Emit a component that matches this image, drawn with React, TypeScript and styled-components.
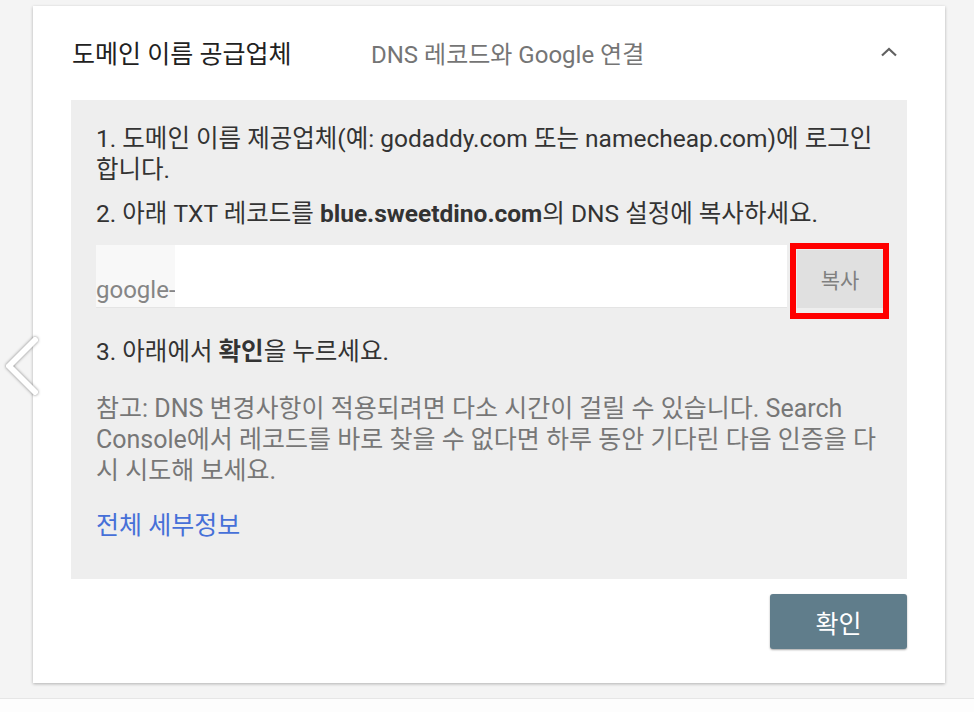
import React from 'react';
import styled, { createGlobalStyle } from 'styled-components';

const GlobalStyle = createGlobalStyle`
  html, body {
    margin: 0;
    padding: 0;
    background: #f4f4f4;
    font-family: Roboto, "Noto Sans CJK KR", sans-serif;
  }
`;

const Page = styled.div`
  position: relative;
  width: 974px;
  height: 712px;
  overflow: hidden;
  background: #f4f4f4;
  padding-top: 6px;
  box-sizing: border-box;
`;

const Card = styled.div`
  margin-left: 33px;
  width: 912px;
  height: 677px;
  background: #fff;
  box-shadow: 0 1px 3px rgba(0, 0, 0, 0.28);
  padding: 0 38px;
  box-sizing: border-box;
  display: flex;
  flex-direction: column;
`;

const Header = styled.div`
  height: 94px;
  display: flex;
  align-items: center;
  padding-left: 1px;
  padding-bottom: 2px;
  box-sizing: border-box;
`;

const Title = styled.div`
  width: 299px;
  font-size: 25px;
  color: #212121;
`;

const Subtitle = styled.div`
  flex: 1;
  font-size: 24px;
  color: #757575;
`;

const Toggle = styled.div`
  width: 20px;
  margin-right: 8px;
  display: flex;
  justify-content: center;
`;

const Panel = styled.div`
  background: #eeeeee;
  padding: 23px 25px 38px 25px;
  display: flex;
  flex-direction: column;
`;

const Step = styled.p<{ $gap?: number }>`
  margin: 0 0 ${p => p.$gap ?? 13}px 0;
  font-size: 24.5px;
  line-height: 31px;
  color: #333;
`;

const FieldRow = styled.div`
  display: flex;
  align-items: flex-start;
  margin: 16px -7px 17px 0;
`;

const Field = styled.div`
  flex: 1;
  height: 63px;
  display: flex;
  border-bottom: 1px solid #e4e4e4;
  box-sizing: border-box;
`;

const FieldPrefix = styled.span`
  width: 79px;
  background: #f8f8f8;
  display: flex;
  align-items: flex-end;
  font-size: 24px;
  color: #858585;
  line-height: 1;
  padding-bottom: 5px;
  box-sizing: border-box;
  overflow: hidden;
  white-space: nowrap;
`;

const FieldMask = styled.span`
  flex: 1;
  background: #fff;
`;

const Highlight = styled.div`
  flex-shrink: 0;
  margin-left: 3px;
  margin-top: -2px;
  border: 6px solid #ff0000;
  padding: 1px 0 5px 1px;
`;

const CopyButton = styled.button`
  width: 86px;
  height: 58px;
  border: none;
  background: #e0e0e0;
  color: #808080;
  font-family: inherit;
  font-size: 21px;
  padding: 0;
  display: flex;
  align-items: center;
  justify-content: center;
`;

const Note = styled.p`
  margin: 26px 0 24px 0;
  font-size: 25px;
  line-height: 31px;
  color: #777;
`;

const Link = styled.a`
  font-size: 25px;
  line-height: 31px;
  color: #4670d8;
  text-decoration: none;
`;

const Footer = styled.div`
  display: flex;
  justify-content: flex-end;
  padding-top: 15px;
`;

const ConfirmButton = styled.button`
  width: 137px;
  height: 55px;
  border: none;
  border-radius: 3px;
  background: #607d8b;
  color: #fff;
  font-family: inherit;
  font-size: 25px;
  padding: 0;
  box-shadow: 0 1px 2px rgba(0, 0, 0, 0.35);
`;

const BottomCard = styled.div`
  position: absolute;
  left: 0;
  right: 0;
  top: 698px;
  height: 20px;
  background: #fdfdfd;
  border-top: 1px solid #e6e6e6;
`;

const PrevArrow = styled.div`
  position: absolute;
  left: 2px;
  top: 334px;
  width: 40px;
  height: 64px;
  filter: drop-shadow(0 0 1.5px rgba(0, 0, 0, 0.5));
`;

const App: React.FC = () => {
  return (
    <Page>
      <GlobalStyle />
      <Card>
        <Header>
          <Title>도메인 이름 공급업체</Title>
          <Subtitle>DNS 레코드와 Google 연결</Subtitle>
          <Toggle>
            <svg width="18" height="12" viewBox="0 0 18 12">
              <polyline points="2,9.5 9,3 16,9.5" fill="none" stroke="#616161" strokeWidth="2.2" />
            </svg>
          </Toggle>
        </Header>

        <Panel>
          <Step>1. 도메인 이름 제공업체(예: godaddy.com 또는 namecheap.com)에 로그인 합니다.</Step>
          <Step $gap={0}>
            2. 아래 TXT 레코드를 <strong>blue.sweetdino.com</strong>의 DNS 설정에 복사하세요.
          </Step>
          <FieldRow>
            <Field>
              <FieldPrefix>google-</FieldPrefix>
              <FieldMask />
            </Field>
            <Highlight>
              <CopyButton>복사</CopyButton>
            </Highlight>
          </FieldRow>
          <Step $gap={0}>
            3. 아래에서 <strong>확인</strong>을 누르세요.
          </Step>
          <Note>
            참고: DNS 변경사항이 적용되려면 다소 시간이 걸릴 수 있습니다. Search Console에서 레코드를 바로 찾을 수
            없다면 하루 동안 기다린 다음 인증을 다시 시도해 보세요.
          </Note>
          <div>
            <Link href="#">전체 세부정보</Link>
          </div>
        </Panel>

        <Footer>
          <ConfirmButton>확인</ConfirmButton>
        </Footer>
      </Card>
      <BottomCard />
      <PrevArrow>
        <svg width="40" height="64" viewBox="0 0 40 64">
          <polyline points="33,6 7,32 33,58" fill="none" stroke="#fff" strokeWidth="6" strokeLinecap="round" strokeLinejoin="round" />
        </svg>
      </PrevArrow>
    </Page>
  );
};

export default App;
